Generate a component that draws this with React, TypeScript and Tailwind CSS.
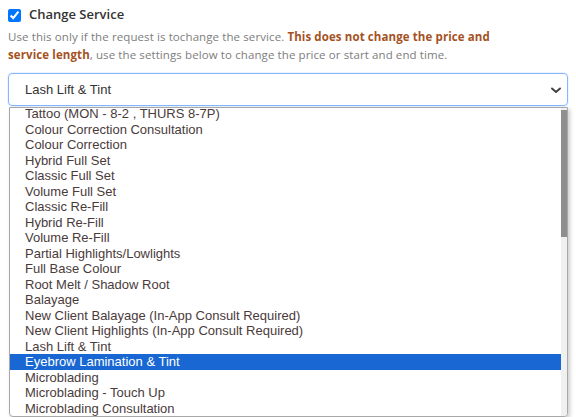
import React from 'react';

const services = [
  'Tattoo (MON - 8-2 , THURS 8-7P)',
  'Colour Correction Consultation',
  'Colour Correction',
  'Hybrid Full Set',
  'Classic Full Set',
  'Volume Full Set',
  'Classic Re-Fill',
  'Hybrid Re-Fill',
  'Volume Re-Fill',
  'Partial Highlights/Lowlights',
  'Full Base Colour',
  'Root Melt / Shadow Root',
  'Balayage',
  'New Client Balayage (In-App Consult Required)',
  'New Client Highlights (In-App Consult Required)',
  'Lash Lift & Tint',
  'Eyebrow Lamination & Tint',
  'Microblading',
  'Microblading - Touch Up',
  'Microblading Consultation',
  'Microblading Annual Touch Up',
];

const selected = 'Eyebrow Lamination & Tint';

export default function App() {
  return (
    <div className="w-[576px] h-[417px] overflow-hidden bg-white px-2 pt-[5px] font-['Open_Sans',sans-serif]">
      <label className="flex h-[20px] items-center gap-2">
        <input type="checkbox" checked readOnly className="w-[13px] h-[13px] m-0 accent-[#0075ff]" />
        <span className="text-[13px] font-semibold text-[#333]">Change Service</span>
      </label>

      <p className="mt-[3px] max-w-[500px] text-[11.5px] leading-[18px] tracking-[0.1px] text-[#7d7d7d]">
        Use this only if the request is tochange the service.{' '}
        <span className="font-bold text-[#a5521f]">This does not change the price and service length</span>, use the settings below to change the price or start and end time.
      </p>

      <div className="relative mt-[9px]">
        <div className="flex h-[33px] items-center justify-between rounded-[4px] border border-[#86b7fe] pl-4 pr-[5px] shadow-[0_0_0_1px_rgba(13,110,253,0.08)]">
          <span className="font-['Liberation_Sans',Arial,sans-serif] text-[13px] text-[#333]">Lash Lift &amp; Tint</span>
          <svg width="12" height="12" viewBox="0 0 12 12" className="text-[#444]">
            <path d="M2 4.5 L6 8 L10 4.5" fill="none" stroke="currentColor" strokeWidth="2" strokeLinecap="round" strokeLinejoin="round" />
          </svg>
        </div>

        {/* open option list */}
        <div className="absolute left-px right-0 top-[34px] h-[310px] flex overflow-hidden rounded-b-[4px] border border-[#a8a8a8] bg-white shadow-[2px_2px_4px_rgba(0,0,0,0.2)] font-['Liberation_Sans',Arial,sans-serif] text-[13px]">
          <ul className="flex-1 -mt-[2px]">
            {services.map((s) =>
            <li
              key={s}
              className={`h-[15.5px] leading-[15.5px] pl-[15px] whitespace-nowrap ${s === selected ? 'bg-[#1967d2] text-white' : 'text-[#4a3b3b]'}`}>
                {s}
              </li>
            )}
          </ul>
          <div className="w-[6px] bg-[#f0f0f0] pt-[2px]">
            <div className="h-[127px] w-[6px] bg-[#8f8f8f]" />
          </div>
        </div>
      </div>
    </div>);

}
